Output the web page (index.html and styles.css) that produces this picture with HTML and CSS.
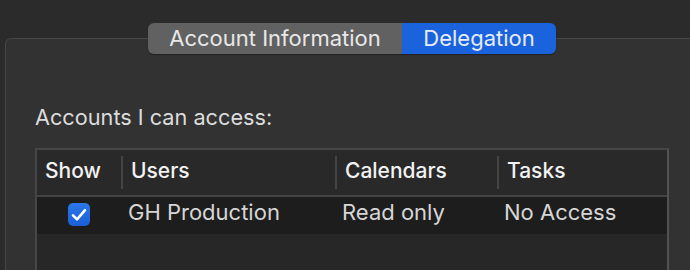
FILE: index.html
```html
<!DOCTYPE html>
<html lang="en">
<head>
    <meta charset="UTF-8">
    <title>Delegation</title>
    <link rel="stylesheet" href="styles.css">
</head>
<body>
    <div class="tabs">
        <div class="tab">Account Information</div>
        <div class="tab active">Delegation</div>
    </div>

    <div class="panel">
        <p class="label">Accounts I can access:</p>

        <div class="table">
            <div class="row head">
                <div class="cell">Show</div>
                <div class="cell sep">Users</div>
                <div class="cell sep">Calendars</div>
                <div class="cell sep">Tasks</div>
            </div>
            <div class="row item">
                <div class="cell center">
                    <span class="check">
                        <svg width="16" height="14" viewBox="0 0 16 14"><path d="M2 7.4 L6 11.4 L14 2.2" fill="none" stroke="#fff" stroke-width="2.6" stroke-linecap="round" stroke-linejoin="round"/></svg>
                    </span>
                </div>
                <div class="cell">GH Production</div>
                <div class="cell">Read only</div>
                <div class="cell">No Access</div>
            </div>
        </div>
    </div>
</body>
</html>
```

FILE: styles.css
```css
html, body {
    height: 270px;
    overflow: hidden;
}
body {
    margin: 0;
    background: #2b2b2b;
    font-family: Inter, "Liberation Sans", sans-serif;
}
.tabs {
    position: relative;
    z-index: 1;
    display: flex;
    margin: 23px 0 0 148px;
    width: 408px;
    height: 31px;
    border-radius: 6px;
    overflow: hidden;
    box-shadow: 0 1px 1px rgba(0,0,0,0.35);
}
.tab {
    display: flex;
    align-items: center;
    justify-content: center;
    width: 254px;
    background: #616161;
    color: #e8e8e8;
    font-size: 22px;
    padding-bottom: 1px;
}
.tab.active {
    width: 154px;
    background: #1a63dc;
    color: #e6ecf8;
}
.panel {
    margin: -16px -20px 0 5px;
    height: 236px;
    background: #323232;
    border: 1px solid #474747;
    border-bottom: none;
    border-radius: 6px 6px 0 0;
    padding: 67px 0 0 29px;
    box-sizing: border-box;
    overflow: hidden;
}
.label {
    margin: 0 0 19px;
    color: #dcdcdc;
    font-size: 21.7px;
    line-height: 23px;
}
.table {
    width: 630px;
    height: 200px;
    background: #272727;
    border-top: 2px solid #464646;
    border-left: 2px solid #464646;
    border-right: 2px solid #525252;
}
.row {
    display: grid;
    grid-template-columns: 84px 214px 162px 1fr;
    align-items: start;
}
.head {
    height: 47px;
    padding-top: 6px;
    box-sizing: border-box;
    background: #292929;
    border-bottom: 2px solid #444;
    color: #f2f2f2;
    font-size: 21px;
    font-weight: 500;
}
.head .cell {
    padding-left: 8px;
    height: 33px;
    line-height: 30px;
}
.head .sep {
    border-left: 2px solid #444;
}
.item {
    height: 37px;
    padding-top: 2px;
    box-sizing: border-box;
    background: #1d1d1d;
    color: #d6d6d6;
    font-size: 22px;
    line-height: 26px;
}
.item .cell {
    padding-left: 7px;
}
.item .center {
    display: flex;
    justify-content: center;
    padding: 4px 0 0;
}
.check {
    display: flex;
    align-items: center;
    justify-content: center;
    width: 22px;
    height: 23px;
    border-radius: 5px;
    background: linear-gradient(#2b77ea, #1a5fd6);
}
```
